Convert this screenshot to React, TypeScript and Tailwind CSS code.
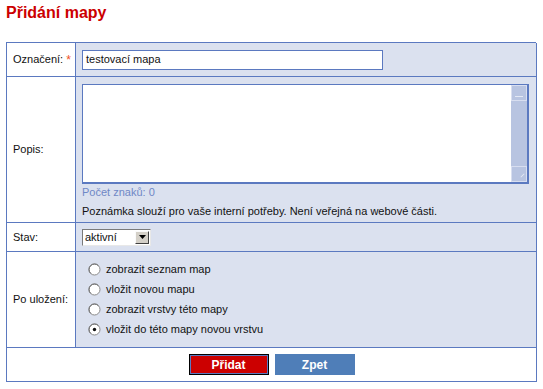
import React from "react";

function Radio({ checked }: { checked?: boolean }) {
  return (
    <svg width="13" height="13" viewBox="0 0 13 13" className="shrink-0">
      <circle cx="6.5" cy="6.5" r="5.5" fill="#fff" stroke="#8a8a8a" strokeWidth="1" />
      <path d="M2.6 10.4 A5.5 5.5 0 0 1 10.4 2.6" fill="none" stroke="#6d6d6d" strokeWidth="1" />
      {checked && <circle cx="6.5" cy="6.5" r="1.7" fill="#111" />}
    </svg>
  );
}

export default function App() {
  const options = [
    { label: "zobrazit seznam map" },
    { label: "vložit novou mapu" },
    { label: "zobrazit vrstvy této mapy" },
    { label: "vložit do této mapy novou vrstvu", checked: true },
  ];

  return (
    <div className="min-h-[389px] w-[543px] bg-white px-[6px] font-['Liberation_Sans',Arial,sans-serif] text-[11px] text-[#111]">
      <h1 className="h-[42px] pt-[4px] text-[16px] font-bold leading-[18px] text-[#cc0000]">Přidání mapy</h1>

      <div className="grid w-[530px] grid-cols-[69px_461px] border-t border-l border-[#5b79c0]">
        {/* Označení */}
        <div className="flex h-[34px] items-center gap-[3px] border-r border-b border-[#5b79c0] pl-[6px]">
          <span>Označení:</span>
          <span className="text-[12px] leading-none text-[#f0501e]">*</span>
        </div>
        <div className="flex h-[34px] items-center border-r border-b border-[#5b79c0] bg-[#dbe1ef] pl-[6px]">
          <div className="flex h-[20px] w-[301px] items-center border border-[#5b79c0] bg-white px-[3px]">testovací mapa</div>
        </div>

        {/* Popis */}
        <div className="flex h-[146px] items-center border-r border-b border-[#5b79c0] pl-[6px]">Popis:</div>
        <div className="h-[146px] border-r border-b border-[#5b79c0] bg-[#dbe1ef] pt-[7px] pl-[6px]">
          <div className="flex h-[100px] w-[447px] border-t border-l border-[#5b79c0] border-r-2 border-b-2 bg-white">
            <div className="flex-1" />
            <div className="flex w-[16px] flex-col justify-between bg-[#b8c4e1]">
              <div className="flex h-[16px] items-end justify-center border border-[#d8def0] pb-[3px]">
                <div className="h-px w-[8px] bg-[#e4e9f5]" />
              </div>
              <div className="flex h-[16px] items-end justify-end border border-[#d8def0] pr-[3px] pb-[3px]">
                <div className="h-[5px] w-px rotate-45 bg-[#e4e9f5]" />
              </div>
            </div>
          </div>
          <div className="mt-[2px] leading-[13px] text-[#6f88c6]">Počet znaků: 0</div>
          <div className="mt-[6px] leading-[13px]">Poznámka slouží pro vaše interní potřeby. Není veřejná na webové části.</div>
        </div>

        {/* Stav */}
        <div className="flex h-[29px] items-center border-r border-b border-[#5b79c0] pl-[6px]">Stav:</div>
        <div className="flex h-[29px] items-center border-r border-b border-[#5b79c0] bg-[#dbe1ef] pl-[6px]">
          <div className="flex h-[17px] w-[69px] items-center border-t border-l border-[#7a7a7a] border-r border-b border-r-[#e8e8e8] border-b-[#e8e8e8] bg-white">
            <span className="flex-1 pl-[2px] leading-[13px]">aktivní</span>
            <div className="mr-[1px] flex h-[13px] w-[14px] items-center justify-center border border-t-[#fafafa] border-l-[#fafafa] border-r-[#404040] border-b-[#404040] bg-[#d4d0c8]">
              <svg width="7" height="4" viewBox="0 0 7 4">
                <path d="M0 0h7L3.5 4z" fill="#000" />
              </svg>
            </div>
          </div>
        </div>

        {/* Po uložení */}
        <div className="flex h-[96px] items-center border-r border-b border-[#5b79c0] pl-[6px]">Po uložení:</div>
        <div className="flex h-[96px] flex-col justify-center gap-[7px] border-r border-b border-[#5b79c0] bg-[#dbe1ef] pl-[12px]">
          {options.map((o) => (
            <div key={o.label} className="flex h-[13px] items-center gap-[5px]">
              <Radio checked={o.checked} />
              <span className="leading-[13px]">{o.label}</span>
            </div>
          ))}
        </div>

        {/* Buttons */}
        <div className="col-span-2 flex h-[34px] items-center justify-center gap-[6px] border-r border-b border-[#5b79c0]">
          <button className="h-[21px] w-[80px] border border-black bg-[#cc0000] text-[12px] font-bold text-white outline outline-1 -outline-offset-2 outline-[#5b79c0]">
            Přidat
          </button>
          <button className="h-[21px] w-[80px] bg-[#4f7eb8] text-[12px] font-bold text-white">Zpet</button>
        </div>
      </div>
    </div>
  );
}
